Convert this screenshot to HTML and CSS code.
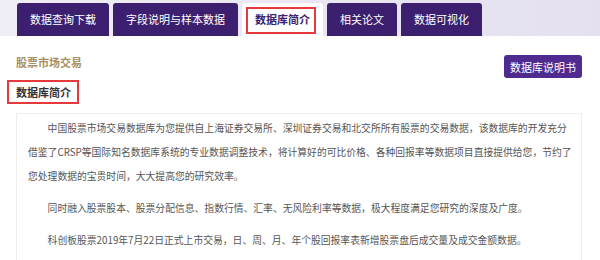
FILE: index.html
```html
<!DOCTYPE html>
<html lang="zh-CN">
<head>
    <meta charset="UTF-8">
    <meta name="viewport" content="width=device-width, initial-scale=1.0">
    <title>数据库简介</title>
    <link rel="stylesheet" href="styles.css">
</head>
<body>
    <div class="tabs">
        <div class="tab">数据查询下载</div>
        <div class="tab">字段说明与样本数据</div>
        <div class="tab active">数据库简介</div>
        <div class="tab">相关论文</div>
        <div class="tab">数据可视化</div>
    </div>

    <div class="main">
        <div class="page-head">
            <div class="market">股票市场交易</div>
            <button class="manual-btn">数据库说明书</button>
        </div>

        <div class="section-title">数据库简介</div>

        <div class="intro">
            <p>中国股票市场交易数据库为您提供自上海证券交易所、深圳证券交易和北交所所有股票的交易数据，该数据库的开发充分借鉴了CRSP等国际知名数据库系统的专业数据调整技术，将计算好的可比价格、各种回报率等数据项目直接提供给您，节约了您处理数据的宝贵时间，大大提高您的研究效率。</p>
            <p>同时融入股票股本、股票分配信息、指数行情、汇率、无风险利率等数据，极大程度满足您研究的深度及广度。</p>
            <p>科创板股票2019年7月22日正式上市交易，日、周、月、年个股回报率表新增股票盘后成交量及成交金额数据。</p>
        </div>
    </div>
</body>
</html>
```

FILE: styles.css
```css
body {
    margin: 0;
    font-family: "Noto Sans CJK SC", "Noto Sans", sans-serif;
    background: #fff;
}
.tabs {
    display: flex;
    gap: 4px;
    height: 36px;
    box-sizing: border-box;
    padding: 3px 0 0 17px;
    background: linear-gradient(to right, #efedf5, #e9e6f2 60%, #e4e0f0);
}
.tab {
    position: relative;
    padding: 0 13px;
    line-height: 33px;
    font-size: 11px;
    color: #fff;
    background: #3c1f6e;
    border-radius: 3px 3px 0 0;
}
.tab.active {
    background: #fff;
    color: #3c1f6e;
    font-weight: bold;
}
/* red annotation frame */
.tab.active::after {
    content: "";
    position: absolute;
    left: 4px;
    right: 7px;
    top: 4px;
    bottom: 2px;
    border: 2px solid #e5393b;
}
.main {
    padding: 0 18px 0 16px;
}
.page-head {
    display: flex;
    justify-content: space-between;
    align-items: flex-start;
    margin-top: 19px;
}
.market {
    font-size: 11px;
    font-weight: bold;
    line-height: 14px;
    color: #a88f62;
}
.manual-btn {
    width: 78px;
    height: 23px;
    padding: 0;
    border: 0;
    border-radius: 3px;
    background: #4f2b8f;
    color: #fff;
    font-family: inherit;
    font-size: 11px;
}
.section-title {
    display: inline-block;
    margin: 2px 0 0 -9px;
    padding: 0 6px 0 7px;
    border: 2px solid #e5393b;
    line-height: 20px;
    font-size: 11px;
    font-weight: bold;
    color: #333;
}
.intro {
    margin-top: 9px;
    padding: 2px 9px 8px 11px;
    border: 1px solid #eee;
}
.intro p {
    margin: 0 0 8px;
    font-size: 9.8px;
    line-height: 24px;
    text-indent: 2em;
    color: #555;
}
.intro p:last-child {
    margin-bottom: 0;
}
```
